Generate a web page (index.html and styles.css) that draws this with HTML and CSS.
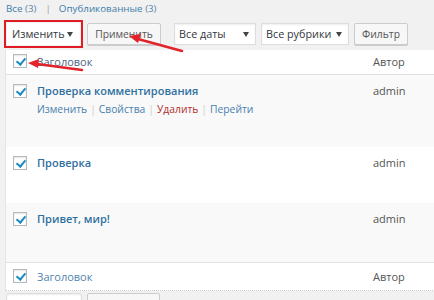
FILE: index.html
```html
<!DOCTYPE html>
<html lang="ru">
<head>
    <meta charset="UTF-8">
    <title>Записи</title>
    <link rel="stylesheet" href="styles.css">
</head>
<body>
    <div class="wrap">
        <ul class="subsubsub">
            <li><a href="#">Все <span class="count">(3)</span></a></li>
            <li class="sep">|</li>
            <li><a href="#">Опубликованные <span class="count">(3)</span></a></li>
        </ul>

        <div class="tablenav">
            <div class="highlight">
                <div class="select select-bulk">Изменить <span class="caret"></span></div>
            </div>
            <button class="btn btn-apply">Применить</button>
            <div class="select select-dates">Все даты <span class="caret"></span></div>
            <div class="select select-cats">Все рубрики <span class="caret"></span></div>
            <button class="btn btn-filter">Фильтр</button>
        </div>

        <div class="posts">
            <div class="row row-head">
                <div class="cell-cb"><span class="cb checked"></span></div>
                <div class="cell-title"><span class="col-name head">Заголовок</span></div>
                <div class="cell-author">Автор</div>
            </div>
            <div class="row row-alt row-1">
                <div class="cell-cb"><span class="cb checked"></span></div>
                <div class="cell-title">
                    <a href="#" class="row-title">Проверка комментирования</a>
                    <div class="row-actions">
                        <a href="#">Изменить</a><span class="bar">|</span><a href="#">Свойства</a><span class="bar">|</span><a href="#" class="trash">Удалить</a><span class="bar">|</span><a href="#">Перейти</a>
                    </div>
                </div>
                <div class="cell-author">admin</div>
            </div>
            <div class="row row-2">
                <div class="cell-cb"><span class="cb checked"></span></div>
                <div class="cell-title"><a href="#" class="row-title">Проверка</a></div>
                <div class="cell-author">admin</div>
            </div>
            <div class="row row-alt row-3">
                <div class="cell-cb"><span class="cb checked"></span></div>
                <div class="cell-title"><a href="#" class="row-title">Привет, мир!</a></div>
                <div class="cell-author">admin</div>
            </div>
            <div class="row row-foot">
                <div class="cell-cb"><span class="cb checked"></span></div>
                <div class="cell-title"><span class="col-name">Заголовок</span></div>
                <div class="cell-author">Автор</div>
            </div>
        </div>

        <div class="tablenav tablenav-bottom">
            <div class="select select-bulk-bottom"></div>
            <button class="btn btn-apply-bottom"></button>
        </div>

        <!-- annotation arrows -->
        <svg class="arrows" width="434" height="300" viewBox="0 0 434 300">
            <line x1="182" y1="51" x2="138" y2="39" stroke="#e3222a" stroke-width="2.5" stroke-linecap="round"/>
            <polygon points="129,36 141,34 138,43" fill="#e3222a"/>
            <line x1="82" y1="70" x2="37" y2="64" stroke="#e3222a" stroke-width="2.5" stroke-linecap="round"/>
            <polygon points="28,63 39,59 38,68" fill="#e3222a"/>
        </svg>
    </div>
</body>
</html>
```

FILE: styles.css
```css
* {
    box-sizing: border-box;
    margin: 0;
    padding: 0;
}
body {
    background: #f1f1f1;
    color: #555;
    font-family: "Open Sans", "Liberation Sans", sans-serif;
    font-size: 10.7px;
    overflow: hidden;
}
a {
    color: #2f6fa0;
    text-decoration: none;
}
.wrap {
    position: relative;
    width: 434px;
    height: 300px;
    padding-left: 6px;
    overflow: hidden;
}

/* status links */
.subsubsub {
    list-style: none;
    display: flex;
    height: 17px;
    line-height: 17px;
    font-size: 9.8px;
    color: #666;
}
.subsubsub a {
    color: #3d7cab;
}
.subsubsub .count {
    color: #5f85a6;
}
.subsubsub .sep {
    padding: 0 8px 0 9px;
    color: #999;
}

/* toolbar */
.tablenav {
    display: flex;
    align-items: center;
    height: 33px;
}
.highlight {
    border: 2px solid #e01b24;
    margin-left: -2px;
    padding: 2px 1px;
    width: 79px;
    height: 28px;
    display: flex;
    align-items: center;
}
.select {
    position: relative;
    background: #fff;
    border: 1px solid #ddd;
    height: 22px;
    line-height: 20px;
    padding-left: 4px;
    color: #32373c;
    font-size: 10.8px;
    box-shadow: inset 0 1px 2px rgba(0, 0, 0, 0.07);
}
.caret {
    position: absolute;
    right: 6px;
    top: 8px;
    border-left: 3px solid transparent;
    border-right: 3px solid transparent;
    border-top: 5px solid #444;
}
.select-bulk {
    width: 73px;
    height: 22px;
    border-color: #fff;
    box-shadow: none;
}
.btn {
    background: #f7f7f7;
    border: 1px solid #ccc;
    border-radius: 2px;
    height: 22px;
    color: #555;
    font-family: "Open Sans", "Liberation Sans", sans-serif;
    font-size: 10.3px;
    box-shadow: 0 1px 0 #ccc;
}
.btn-apply {
    width: 74px;
    margin-left: 4px;
}
.select-dates {
    width: 82px;
    margin-left: 13px;
}
.select-cats {
    width: 88px;
    margin-left: 5px;
}
.btn-filter {
    width: 54px;
    margin-left: 5px;
}

/* posts table */
.posts {
    width: 440px;
    margin-left: -1px;
    background: #fff;
    border-left: 1px solid #e5e5e5;
    border-bottom: 1px dotted #ccc;
}
.row {
    display: flex;
    align-items: flex-start;
    padding-top: 6px;
}
.row-alt {
    background: #f9f9f9;
}
.row-head {
    height: 25px;
    padding-top: 3px;
    border-bottom: 1px solid #e1e1e1;
}
.row-1 { height: 72px; }
.row-2 { height: 56px; }
.row-3 { height: 59px; }
.row-foot {
    height: 28px;
    padding-top: 5px;
    border-top: 1px solid #e1e1e1;
}
.cell-cb {
    width: 31px;
    padding-left: 7px;
    padding-top: 3px;
}
.row-head .cell-cb,
.row-foot .cell-cb {
    padding-top: 1px;
}
.cell-title {
    width: 336px;
}
.cell-author {
    line-height: 19px;
    font-size: 11px;
    color: #555;
}
.row-head .cell-author,
.row-foot .cell-author {
    line-height: 18px;
    font-size: 11px;
}
.col-name {
    line-height: 18px;
    font-size: 11px;
    color: #5283ae;
}
.col-name.head {
    color: #4d6580;
}
.cb {
    display: block;
    width: 14px;
    height: 14px;
    background: #fff;
    border: 1px solid #b4b9be;
    box-shadow: inset 0 1px 2px rgba(0, 0, 0, 0.1);
    position: relative;
}
.cb.checked::after {
    content: "";
    position: absolute;
    left: 4px;
    top: 1px;
    width: 4px;
    height: 7px;
    border-right: 2px solid #1e8cbe;
    border-bottom: 2px solid #1e8cbe;
    transform: rotate(40deg);
}
.row-title {
    display: block;
    font-size: 11px;
    font-weight: 600;
    line-height: 19px;
    color: #30709f;
}
.row-actions {
    line-height: 18px;
    font-size: 10.3px;
}
.row-actions a {
    color: #4880ad;
}
.row-actions .trash {
    color: #b32d2e;
}
.row-actions .bar {
    color: #ccc;
    padding: 0 3px;
}

/* bottom toolbar */
.tablenav-bottom {
    align-items: flex-start;
    padding-top: 2px;
}
.select-bulk-bottom {
    width: 76px;
    height: 22px;
    border-radius: 3px;
}
.btn-apply-bottom {
    width: 73px;
    margin-left: 5px;
    background: #f7f7f7;
}

/* annotation overlay */
.arrows {
    position: absolute;
    left: 0;
    top: 0;
    pointer-events: none;
}
```
